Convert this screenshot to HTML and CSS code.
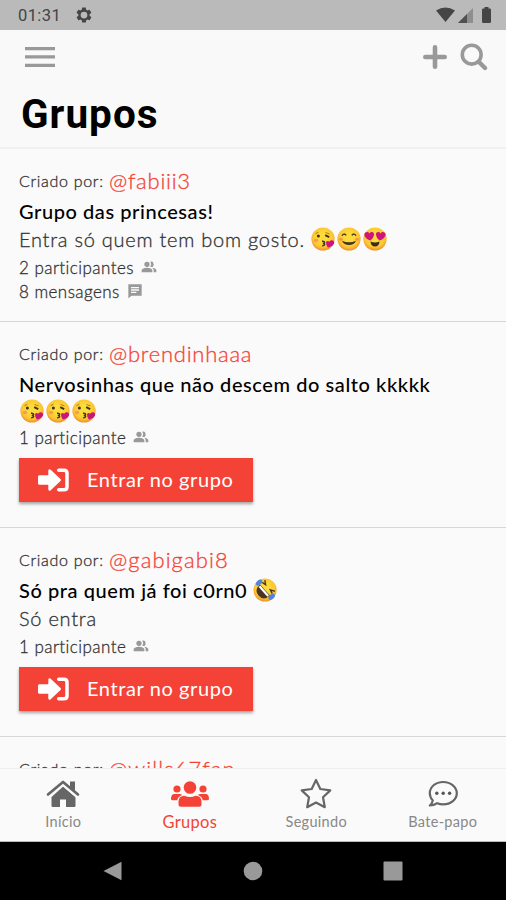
FILE: index.html
```html
<!DOCTYPE html>
<html lang="pt-BR">
<head>
<meta charset="utf-8">
<title>Grupos</title>
<link rel="stylesheet" href="styles.css">
</head>
<body>
<svg class="defs" aria-hidden="true">
  <defs>
    <radialGradient id="face" cx=".5" cy=".42" r=".58"><stop offset=".3" stop-color="#fddc3a"/><stop offset=".75" stop-color="#fbc633"/><stop offset="1" stop-color="#f08c28"/></radialGradient>
    <symbol id="kiss" viewBox="0 0 24 24"><circle cx="12" cy="12" r="11.6" fill="url(#face)"/><ellipse cx="5" cy="13.5" rx="2.3" ry="1.7" fill="#fa9a55"/><path d="M4.5 6.8l3-1.6M14.5 5.5l4 1.5" stroke="#b67618" stroke-width="1" fill="none"/><circle cx="7.4" cy="9" r="1.5" fill="#3e3022"/><path d="M14.2 8.2l4 2" stroke="#3e3022" stroke-width="2" fill="none"/><path d="M11 14.2c3.5-.2 3.4 2.2.8 2.2 2.6.1 2.5 2.6-.8 2.5" stroke="#3e3022" stroke-width="1.4" fill="none"/><path d="M17 20.5c-3.500-4-1.700-8.400 1.200-5.700 3.100-3.600 7 .1 3.800 3.100-1.300 1.300-3 2.100-5 2.600z" fill="#cc147f"/></symbol>
    <symbol id="smile" viewBox="0 0 24 24"><circle cx="12" cy="12" r="11.600" fill="url(#face)"/><path d="M5 8.700q2-3 4.200-.3M14.800 8.400q2.200-2.700 4.200.3" stroke="#4b3820" stroke-width="1.500" fill="none"/><ellipse cx="3.900" cy="12.300" rx="2" ry="1.500" fill="#fa9350"/><ellipse cx="20.100" cy="12.300" rx="2" ry="1.500" fill="#fa9350"/><path d="M5 13.800q7 3 14 0-2 4.300-7 4.300t-7-4.300z" fill="#453522"/></symbol>
    <symbol id="hearts" viewBox="0 0 24 24"><circle cx="12" cy="12" r="11.600" fill="url(#face)"/><path d="M7.500 13.500C2 12-.5 6.700 3 5.300q2.300-.8 3.400 1.200C8 4 11.200 4.700 11 7.500c-.1 2.500-1.800 4.500-3.500 6z" fill="#cf147d"/><path d="M16.500 13.500c5.500-1.500 8-6.800 4.500-8.200q-2.300-.8-3.400 1.200C16 4 12.800 4.700 13 7.500c.1 2.500 1.800 4.500 3.500 6z" fill="#cf147d"/><path d="M7.500 14.500q4.500 1.800 9 0-.5 5-4.500 5t-4.500-5z" fill="#392b24"/></symbol>
    <symbol id="rofl" viewBox="0 0 24 24"><circle cx="12" cy="12" r="11.600" fill="url(#face)"/><g transform="rotate(48 12 12)"><path d="M4.500 5.500l4 2.500-4 1M19.500 5.500l-4 2.500 4 1" stroke="#4b3820" stroke-width="1.400" fill="none"/><path d="M4.500 12h15q0 8.500-7.500 8.500T4.500 12z" fill="#4a3524"/><path d="M5.500 12.500h13v2.200h-13z" fill="#fff"/><ellipse cx="2.500" cy="11.500" rx="2.300" ry="3.700" fill="#4f83e6"/><ellipse cx="21.500" cy="11.500" rx="2.300" ry="3.700" fill="#4f83e6"/></g></symbol>
    <symbol id="people" viewBox="0 0 24 24"><path fill="currentColor" d="M16.700 13.100c1.400 1 2.300 2.200 2.300 3.900v3h4v-3c0-2.200-3.600-3.500-6.300-3.900zM15 12a4 4 0 1 0-1.300-7.800 6 6 0 0 1 0 7.600c.4.100.8.200 1.300.2zM9 12a4 4 0 1 0 0-8 4 4 0 0 0 0 8zm0 1c-2.700 0-8 1.300-8 4v3h16v-3c0-2.700-5.300-4-8-4z"/></symbol>
    <symbol id="chat" viewBox="0 0 24 24"><path fill="currentColor" d="M22 2H2v21l5-4h15zM6 6h12v2H6zm0 3.500h12v2H6zM6 13h8v2H6z"/></symbol>
    <symbol id="enter" viewBox="0 0 31 24"><path fill="#fff" d="M1.500 7.300h8.800V2.800c0-1.500 1.400-2 2.400-1L22.500 11c.6.600.6 1.400 0 2l-9.800 9.200c-1 1-2.400.4-2.400-1v-4.500H1.500C.7 16.700 0 16 0 15.200V8.800c0-.8.700-1.500 1.500-1.500z"/><path fill="none" stroke="#fff" stroke-width="3.500" stroke-linecap="round" stroke-linejoin="round" d="M20.700 2.200h5.200q3.100 0 3.100 3.100v13.400q0 3.100-3.100 3.100h-5.200"/></symbol>
  </defs>
</svg>
<div class="app">
  <div class="status">
    <span class="clock">01:31</span>
    <svg class="gear" viewBox="0 0 24 24"><path fill="#454545" fill-rule="evenodd" d="M19.400 13a7.500 7.500 0 0 0 0-2l2.100-1.600c.2-.2.200-.4.100-.6l-2-3.500c-.1-.2-.4-.3-.6-.2l-2.500 1a7.600 7.600 0 0 0-1.700-1l-.4-2.700a.5.500 0 0 0-.5-.4h-4a.5.500 0 0 0-.5.400L9 5.100a7.600 7.600 0 0 0-1.700 1l-2.500-1c-.2-.1-.5 0-.6.200l-2 3.500c-.1.200-.1.400.1.600L4.500 11a7.500 7.500 0 0 0 0 2l-2.100 1.600c-.2.200-.2.400-.1.600l2 3.500c.1.200.4.300.6.200l2.500-1a7.600 7.600 0 0 0 1.700 1l.4 2.700c0 .2.200.4.500.4h4c.2 0 .4-.2.500-.4l.4-2.700a7.600 7.600 0 0 0 1.700-1l2.500 1c.2.100.5 0 .6-.2l2-3.500c.1-.2.100-.4-.1-.6zM12 16.500a4.500 4.500 0 1 1 0-9 4.500 4.500 0 0 1 0 9z"/></svg>
    <svg class="signals" viewBox="0 0 56 18"><path fill="#454545" d="M0 4.500Q9.500-1.500 19 4.500L9.500 16z"/><path fill="#8e8e8e" d="M37 2v15H22z"/><path fill="#505050" d="M31 8v9h-9z"/><path fill="#454545" d="M48.500 1h4v1.500h1.300q1.200 0 1.200 1.200v12.100q0 1.200-1.200 1.200h-6.600q-1.200 0-1.200-1.200V3.700q0-1.200 1.200-1.200h1.300z"/></svg>
  </div>
  <header class="header">
    <div class="tools">
      <svg class="menu" viewBox="0 0 30 20"><path fill="#999" d="M0 0h30v3.300H0zM0 8.300h30v3.300H0zM0 16.700h30V20H0z"/></svg>
      <svg class="plus" viewBox="0 0 24 24"><path stroke="#999" stroke-width="4.600" stroke-linecap="round" d="M12 2.300v19.400M2.300 12h19.400"/></svg>
      <svg class="search" viewBox="0 0 28 28"><g fill="none" stroke="#999"><circle cx="11.700" cy="11.700" r="9.400" stroke-width="3.600"/><path stroke-width="4.400" stroke-linecap="round" d="M19 19l6 6"/></g></svg>
    </div>
    <h1>Grupos</h1>
  </header>
  <main class="list">
    <article class="group first">
      <div class="by"><span class="by-label">Criado por:</span><span class="user">@fabiii3</span></div>
      <h2><span>Grupo das princesas!</span></h2>
      <p><span>Entra só quem tem bom gosto.</span><span class="emojis"><svg><use href="#kiss"/></svg><svg><use href="#smile"/></svg><svg><use href="#hearts"/></svg></span></p>
      <div class="meta"><span>2 participantes</span><svg><use href="#people"/></svg></div>
      <div class="meta"><span>8 mensagens</span><svg><use href="#chat"/></svg></div>
    </article>
    <article class="group joinable">
      <div class="by"><span class="by-label">Criado por:</span><span class="user">@brendinhaaa</span></div>
      <h2><span>Nervosinhas que não descem do salto kkkkk</span></h2>
      <div class="title-emojis emojis"><svg><use href="#kiss"/></svg><svg><use href="#kiss"/></svg><svg><use href="#kiss"/></svg></div>
      <div class="meta"><span>1 participante</span><svg><use href="#people"/></svg></div>
      <button><svg><use href="#enter"/></svg><span>Entrar no grupo</span></button>
    </article>
    <article class="group joinable">
      <div class="by"><span class="by-label">Criado por:</span><span class="user wide">@gabigabi8</span></div>
      <h2><span>Só pra quem já foi c0rn0</span><span class="emojis"><svg><use href="#rofl"/></svg></span></h2>
      <p><span>Só entra</span></p>
      <div class="meta"><span>1 participante</span><svg><use href="#people"/></svg></div>
      <button><svg><use href="#enter"/></svg><span>Entrar no grupo</span></button>
    </article>
    <article class="group">
      <div class="by"><span class="by-label">Criado por:</span><span class="user wide">@wills67fan</span></div>
    </article>
  </main>
  <nav class="tabs">
    <a><svg viewBox="0 0 34 28"><path fill="#666" d="M17 6.500L29.500 17v8.800q0 1.200-1.200 1.200H20v-7.500h-6V27H6.700q-1.200 0-1.200-1.200V17z"/><path fill="none" stroke="#fafafa" stroke-width="5" stroke-linejoin="round" d="M2 16L17 3.200 32 16"/><path fill="#666" d="M24 1.500h5v10l-5-4.300z"/><path fill="none" stroke="#666" stroke-width="2.700" stroke-linecap="round" stroke-linejoin="round" d="M2 14.500L17 2l15 12.500"/></svg><span>Início</span></a>
    <a class="active"><svg class="users" viewBox="0 0 38 28"><g fill="#f44336"><circle cx="19" cy="7.500" r="6.300"/><circle cx="6" cy="9" r="3.600"/><circle cx="32" cy="9" r="3.600"/><path d="M12.500 15.700h1q5.500 2.500 11 0h1q5 .7 5 6v2.800q0 2.300-2.300 2.300H9.800q-2.300 0-2.300-2.300v-2.800q0-5.300 5-6zM3.500 14h5q1.600 0 2.700 1-4.200 1.500-5 5.200H1.500Q0 20.200 0 18.700q0-4.700 3.500-4.700zM34.500 14h-5q-1.600 0-2.700 1 4.200 1.500 5 5.200h4.700q1.500 0 1.500-1.500 0-4.700-3.500-4.700z"/></g></svg><span>Grupos</span></a>
    <a><svg viewBox="0 0 34 28"><path fill="none" stroke="#666" stroke-width="2.200" stroke-linejoin="round" d="M17 0l4.300 9 10 1.400-7.300 6.900 1.800 9.900L17 22.500l-8.800 4.700 1.800-9.900-7.300-6.900 10-1.400z"/></svg><span>Seguindo</span></a>
    <a><svg viewBox="0 0 34 28"><path fill="none" stroke="#666" stroke-width="2.200" stroke-linejoin="round" d="M17.200 2C9.500 2 3.800 7 3.800 13.200c0 3 1.200 5.300 3 7.200-.3 2-1.300 3.600-3 5.100 3.100 0 5.500-.9 7.400-2.300 1.900.7 3.900 1.100 6 1.100 7.700 0 13.600-5 13.600-11.100S24.900 2 17.200 2z"/><g fill="#555"><circle cx="10.800" cy="13.200" r="1.700"/><circle cx="17.200" cy="13.200" r="1.700"/><circle cx="23.600" cy="13.200" r="1.700"/></g></svg><span>Bate-papo</span></a>
  </nav>
  <div class="android">
    <svg viewBox="0 0 20 20"><path fill="#999" d="M18.500.8v18.400L.5 10z"/></svg>
    <svg viewBox="0 0 20 20"><circle cx="10" cy="10" r="9.300" fill="#999"/></svg>
    <svg viewBox="0 0 20 20"><rect x=".5" y=".5" width="19" height="19" rx="1" fill="#999"/></svg>
  </div>
</div>
</body>
</html>
```
FILE: styles.css
```css
* { box-sizing: border-box; }
body { margin: 0; background: #fafafa; font-family: Lato, "Open Sans", sans-serif; color: #333; }
.defs { position: absolute; width: 0; height: 0; }
.app { width: 506px; height: 900px; display: flex; flex-direction: column; overflow: hidden; }
.app svg { display: block; flex: none; }
.status { height: 30px; flex: none; background: #bababa; display: flex; align-items: center; padding: 0 14px 0 18px; }
.clock { font: 400 16.500px/30px Roboto, sans-serif; color: #444; width: 44px; letter-spacing: .4px; padding-top: 2px; }
.gear { width: 18px; height: 18px; margin-left: 13px; }
.signals { width: 56px; height: 18px; margin-left: auto; }
.header { height: 119px; flex: none; border-bottom: 2px solid #f0f0f0; background: #f9f9f9; }
.tools { display: flex; align-items: center; height: 54px; padding: 0 18px 0 25px; }
.menu { width: 30px; height: 20px; }
.plus { width: 24px; height: 24px; margin-left: auto; }
.search { width: 28px; height: 28px; margin-left: 13px; }
h1 { margin: 0 0 0 21px; font: 700 40.500px/61px Roboto, sans-serif; color: #000; letter-spacing: 1px; }
.list { height: 619px; flex: none; overflow: hidden; }
.group { padding: 17px 19px 18px; border-bottom: 1px solid #d6d6d6; white-space: nowrap; }
.group.first { padding-bottom: 17px; }
.joinable { padding-bottom: 25px; }
.by { display: flex; align-items: flex-start; height: 31px; line-height: 30px; }
.by-label, .user, p, .meta { font-weight: 300; -webkit-text-stroke: .3px currentColor; }
.by-label { font-size: 16px; width: 90px; letter-spacing: .7px; }
.user { font-size: 22px; color: #f44336; letter-spacing: .75px; }
.user.wide { letter-spacing: 1.100px; }
h2 { margin: 0; display: flex; align-items: center; height: 28px; font-size: 20px; line-height: 28px; font-weight: 500; color: #000; letter-spacing: .57px; }
p { margin: 0; display: flex; align-items: center; height: 29px; padding-bottom: 1px; font-size: 20px; line-height: 28px; letter-spacing: .75px; }
.emojis { display: flex; gap: 2px; margin-left: 6px; }
.emojis svg { width: 24px; height: 24px; }
.title-emojis { margin-left: 1px; height: 26px; align-items: center; }
.meta { display: flex; align-items: center; height: 24px; font-size: 17px; letter-spacing: .45px; }
p + .meta, .emojis + .meta { margin-top: 1px; }
.first .meta:last-child { margin-bottom: 1px; }
.meta svg { width: 16px; height: 16px; margin-left: 7px; color: #999; }
button { display: flex; align-items: center; width: 234px; height: 44px; margin-top: 9px; padding: 0 19px; border: 0; background: #f44336; box-shadow: 0 2px 3px rgba(0,0,0,.35); color: #fff; font: 400 20px/44px Lato, sans-serif; letter-spacing: .6px; }
button span { margin-top: -2px; }
button svg { width: 31px; height: 24px; margin-right: 18px; }
.tabs { height: 74px; flex: none; border-top: 1px solid #efefef; border-bottom: 1px solid #bbb; display: flex; background: #fafafa; }
.tabs a { width: 126.500px; display: flex; flex-direction: column; align-items: center; padding-top: 11px; color: #888; font-size: 14.500px; line-height: 20px; letter-spacing: .3px; }
.tabs svg { width: 34px; height: 28px; margin-bottom: 4px; overflow: visible; }
.tabs .users { width: 38px; }
.tabs .active { color: #f44336; font-size: 16.500px; }
.android { height: 58px; flex: none; background: #000; display: flex; justify-content: center; gap: 120px; padding-top: 19px; }
.android svg { width: 20px; height: 20px; }
```
